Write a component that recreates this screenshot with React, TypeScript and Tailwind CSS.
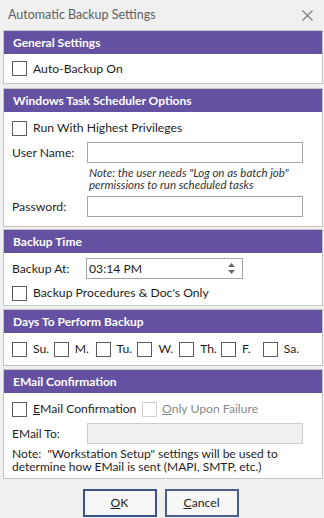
import type { ReactNode } from 'react'

const FONT = { fontFamily: 'Lato, "Noto Sans", sans-serif' }

function Box({ disabled }: { disabled?: boolean }) {
  return (
    <span
      className={`inline-block h-[15px] w-[15px] shrink-0 border bg-white ${
        disabled ? 'border-[#cfcfcf]' : 'border-[#5c5c5c]'
      }`}
    />
  )
}

function Section({ title, children }: { title: string; children: ReactNode }) {
  return (
    <div className="border border-[#c4c4c4] bg-white">
      <div className="flex h-[23px] items-center bg-[#6451a2] pl-[9px] text-[12px] font-bold text-white">
        {title}
      </div>
      {children}
    </div>
  )
}

function Check({ label, className = '' }: { label: ReactNode; className?: string }) {
  return (
    <div className={`flex items-center gap-[6px] ${className}`}>
      <Box />
      <span>{label}</span>
    </div>
  )
}

const DAYS = ['Su.', 'M.', 'Tu.', 'W.', 'Th.', 'F.', 'Sa.']

export default function App() {
  return (
    <div
      className="h-[518px] w-[324px] overflow-hidden bg-[#f0f0f0] text-[12.2px] leading-[16px] text-[#1e1e1e]"
      style={FONT}
    >
      {/* title bar */}
      <div className="flex h-[30px] items-center justify-between pl-[8px] pr-[11px]">
        <span className="text-[12.5px] text-[#5f5f5f]">Automatic Backup Settings</span>
        <svg width="11" height="11" viewBox="0 0 11 11" stroke="#7a7a7a" strokeWidth="1.1">
          <path d="M0.5 0.5 L10.5 10.5 M10.5 0.5 L0.5 10.5" />
        </svg>
      </div>

      <div className="flex flex-col pl-[3px] pr-[1px]">
        <Section title="General Settings">
          <Check label="Auto-Backup On" className="h-[29px] pl-[8px]" />
        </Section>

        <div className="mt-[4px]">
          <Section title="Windows Task Scheduler Options">
            <div className="pb-[9px] pl-[8px] pr-[19px] pt-[8px]">
              <Check label="Run With Highest Privileges" />
              <div className="mt-[6px] flex items-center">
                <span className="w-[75px] shrink-0">User Name:</span>
                <div className="h-[21px] flex-1 border border-[#a5a5a5] bg-white" />
              </div>
              <div className="ml-[77px] mt-[4px] text-[11.5px] italic leading-[12px] text-[#333]">
                Note: the user needs "Log on as batch job"
                <br />
                permissions to run scheduled tasks
              </div>
              <div className="mt-[5px] flex items-center">
                <span className="w-[75px] shrink-0">Password:</span>
                <div className="h-[21px] flex-1 border border-[#a5a5a5] bg-white" />
              </div>
            </div>
          </Section>
        </div>

        <div className="mt-[2px]">
          <Section title="Backup Time">
            <div className="pb-[4px] pl-[8px] pt-[5px]">
              <div className="flex items-center">
                <span className="w-[74px] shrink-0">Backup At:</span>
                <div className="flex h-[21px] w-[157px] items-center justify-between border border-[#a5a5a5] bg-white pl-[2px] pr-[7px]">
                  <span>03:14 PM</span>
                  <svg width="7" height="13" viewBox="0 0 7 13" fill="#6a6a6a">
                    <path d="M3.5 1 L7 5 L0 5 Z M0 8 L7 8 L3.5 12 Z" />
                  </svg>
                </div>
              </div>
              <Check label="Backup Procedures & Doc's Only" className="mt-[6px]" />
            </div>
          </Section>
        </div>

        <div className="mt-[3px]">
          <Section title="Days To Perform Backup">
            <div className="flex h-[32px] items-center pl-[8px]">
              {DAYS.map((d) => (
                <div key={d} className="flex w-[41.8px] shrink-0 items-center gap-[6px]">
                  <Box />
                  <span>{d}</span>
                </div>
              ))}
            </div>
          </Section>
        </div>

        <div className="mt-[3px]">
          <Section title="EMail Confirmation">
            <div className="pb-[5px] pl-[8px] pr-[19px] pt-[8px]">
              <div className="flex items-center">
                <Check
                  className="w-[130px] shrink-0"
                  label={
                    <>
                      <u>E</u>Mail Confirmation
                    </>
                  }
                />
                <div className="flex items-center gap-[5px] text-[#8a8a8a]">
                  <Box disabled />
                  <span>
                    <u>O</u>nly Upon Failure
                  </span>
                </div>
              </div>
              <div className="mt-[6px] flex items-center">
                <span className="w-[75px] shrink-0 text-[12px]">EMail To:</span>
                <div className="h-[21px] flex-1 border border-[#cccccc] bg-[#f0f0f0]" />
              </div>
              <div className="mt-[3px] text-[12px] leading-[13px]">
                Note:&nbsp; "Workstation Setup" settings will be used to
                <br />
                determine how EMail is sent (MAPI, SMTP, etc.)
              </div>
            </div>
          </Section>
        </div>
      </div>

      <div className="mt-[10px] flex justify-center gap-[8px] pr-[3px]">
        <button className="h-[28px] w-[74px] border-2 border-[#3a5589] bg-[#f7f7f7]">
          <u>O</u>K
        </button>
        <button className="h-[28px] w-[74px] border-2 border-[#4b5f86] bg-[#f7f7f7]">
          <u>C</u>ancel
        </button>
      </div>
    </div>
  )
}
